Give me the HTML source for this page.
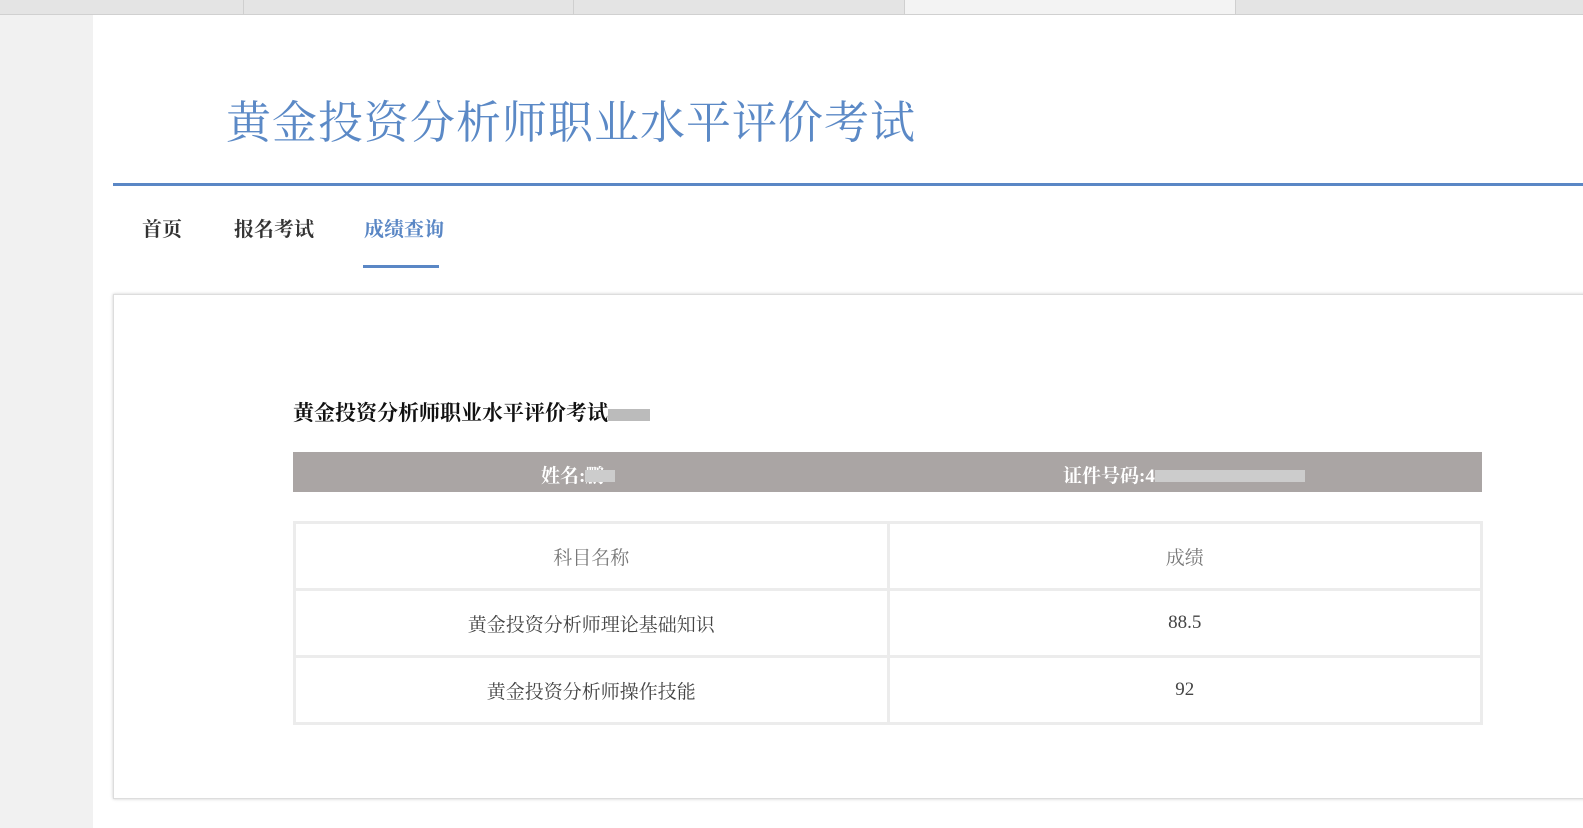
<!DOCTYPE html>
<html><head><meta charset="utf-8"><style>
body{margin:0;width:1583px;height:828px;background:#fff;position:relative;overflow:hidden;font-family:"Liberation Serif","Noto Serif CJK SC",serif}
.tabs{position:absolute;left:0;top:0;width:1583px;height:14px;background:#e4e4e4;border-bottom:1px solid #d0d0d0}
.tabs div{position:absolute;top:0;height:14px;border-left:1px solid #cfcfcf}
.left{position:absolute;left:0;top:15px;width:93px;height:813px;background:#f1f1f1}
.title{position:absolute;left:226px;top:86px;font-size:45px;color:#5b89c6;letter-spacing:1px;white-space:nowrap}
.bl{position:absolute;left:113px;top:183px;width:1470px;height:3px;background:#5a87c5}
.nav{position:absolute;top:213px;font-size:20px;color:#333;font-weight:bold}
.ul{position:absolute;left:363px;top:265px;width:76px;height:3px;background:#5a87c5}
.panel{position:absolute;left:113px;top:294px;width:1480px;height:503px;border:1px solid #ddd;box-shadow:0 0 3px #ccc}
.h{position:absolute;left:293px;top:397px;font-size:21px;font-weight:bold;color:#111;white-space:nowrap}
.bar{position:absolute;left:293px;top:452px;width:1189px;height:40px;background:#aaa5a4;color:#fff;font-size:19px;font-weight:bold}
.bar span{position:absolute;top:9px}
table{position:absolute;left:293px;top:521px;width:1190px;border-collapse:collapse}
td{border:3px solid #ececec;height:62px;text-align:center;font-size:19px;color:#444;width:50%}
.blur{display:inline-block;background:#d9d6d6;height:12px;vertical-align:middle}
</style></head><body>
<div class="tabs"><div style="left:243px"></div><div style="left:573px"></div><div style="left:904px;width:330px;background:#f3f3f3"></div><div style="left:1235px"></div></div>
<div class="left"></div>
<div class="title">黄金投资分析师职业水平评价考试</div>
<div class="bl"></div>
<div class="nav" style="left:142px">首页</div>
<div class="nav" style="left:234px">报名考试</div>
<div class="nav" style="left:364px;color:#5a87c5">成绩查询</div>
<div class="ul"></div>
<div class="panel"></div>
<div class="h">黄金投资分析师职业水平评价考试<span class="blur" style="width:42px;background:#bbb"></span></div>
<div class="bar"><span style="left:248px">姓名:<span class="blur" style="width:30px;background:#ccc"></span>鹏</span><span style="left:770px">证件号码:4<span class="blur" style="width:150px;background:#ccc"></span></span></div>
<table><tr><td style="color:#777">科目名称</td><td style="color:#777">成绩</td></tr>
<tr><td>黄金投资分析师理论基础知识</td><td>88.5</td></tr>
<tr><td>黄金投资分析师操作技能</td><td>92</td></tr></table>
</body></html>
